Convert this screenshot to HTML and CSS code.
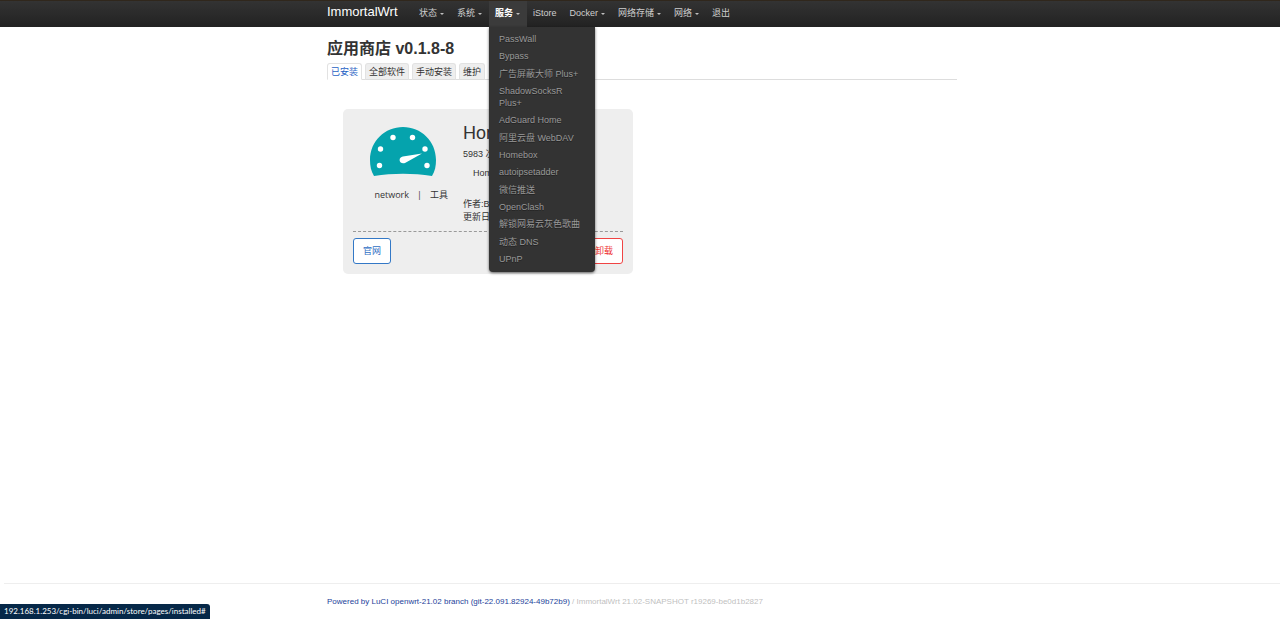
FILE: index.html
```html
<!DOCTYPE html>
<html lang="zh-CN">
<head>
<meta charset="utf-8">
<title>ImmortalWrt - 应用商店</title>
<link rel="stylesheet" href="styles.css">
</head>
<body>
<header class="topbar">
  <div class="container topbar-inner">
    <a class="brand" href="#">ImmortalWrt</a>
    <ul class="nav">
      <li><a class="nav-link has-menu" href="#">状态</a></li>
      <li><a class="nav-link has-menu" href="#">系统</a></li>
      <li class="open">
        <a class="nav-link has-menu" href="#">服务</a>
        <ul class="menu">
          <li><a href="#">PassWall</a></li>
          <li><a href="#">Bypass</a></li>
          <li><a href="#">广告屏蔽大师 Plus+</a></li>
          <li><a href="#">ShadowSocksR Plus+</a></li>
          <li><a href="#">AdGuard Home</a></li>
          <li><a href="#">阿里云盘 WebDAV</a></li>
          <li><a href="#">Homebox</a></li>
          <li><a href="#">autoipsetadder</a></li>
          <li><a href="#">微信推送</a></li>
          <li><a href="#">OpenClash</a></li>
          <li><a href="#">解锁网易云灰色歌曲</a></li>
          <li><a href="#">动态 DNS</a></li>
          <li><a href="#">UPnP</a></li>
        </ul>
      </li>
      <li><a class="nav-link" href="#">iStore</a></li>
      <li><a class="nav-link has-menu" href="#">Docker</a></li>
      <li><a class="nav-link has-menu" href="#">网络存储</a></li>
      <li><a class="nav-link has-menu" href="#">网络</a></li>
      <li><a class="nav-link" href="#">退出</a></li>
    </ul>
  </div>
</header>
<main class="container main">
  <h1 class="title">应用商店 v0.1.8-8</h1>
  <nav class="tabs">
    <a class="tab active" href="#">已安装</a>
    <a class="tab" href="#">全部软件</a>
    <a class="tab" href="#">手动安装</a>
    <a class="tab" href="#">维护</a>
  </nav>
  <section class="apps">
    <article class="card">
      <div class="card-body">
        <div class="card-side">
          <svg class="app-icon" viewBox="0 0 66 49" aria-hidden="true">
            <path fill="#05a3ad" d="M4 49C1 44 0 39 0 33 0 14 15 0 33 0s33 14 33 33c0 6-1 11-4 16-19-3-39-3-58 0z"/>
            <g fill="#fff">
              <circle cx="23" cy="10.500" r="2.700"/><circle cx="42.500" cy="10.500" r="2.700"/>
              <circle cx="10.500" cy="22" r="2.700"/><circle cx="55" cy="22" r="2.700"/>
              <circle cx="9.500" cy="38.500" r="2.700"/><circle cx="57" cy="38.500" r="2.700"/>
              <path d="M52 26.500 35.500 35.700c-2.600 1.500-5.700.4-5.900-2.400-.1-2.100 1.400-3.400 3.300-3.800z"/>
            </g>
          </svg>
          <p class="tags"><span>network</span><span>|</span><span>工具</span></p>
        </div>
        <div class="card-info">
          <h2 class="app-name">Homebox</h2>
          <p class="count">5983 次</p>
          <p class="desc">Home</p>
          <p class="meta">作者:Ben</p>
          <p class="meta">更新日期</p>
        </div>
      </div>
      <div class="card-actions">
        <button class="btn" type="button">官网</button>
        <button class="btn danger" type="button">卸载</button>
      </div>
    </article>
  </section>
</main>
<footer class="footer">
  <div class="container"><p class="credits"><a href="#">Powered by LuCI openwrt-21.02 branch (git-22.091.82924-49b72b9)</a> / ImmortalWrt 21.02-SNAPSHOT r19269-be0d1b2827</p></div>
</footer>
<div class="status">192.168.1.253/cgi-bin/luci/admin/store/pages/installed#</div>
</body>
</html>
```
FILE: styles.css
```css
* { box-sizing: border-box; }
body {
  margin: 0;
  min-height: 100vh;
  display: flex;
  flex-direction: column;
  background: #fff;
  color: #333;
  font: 9px/12px "Liberation Sans", "Noto Sans CJK SC", sans-serif;
}
ul, p, h1, h2 { margin: 0; padding: 0; list-style: none; }
a { text-decoration: none; color: inherit; }
.container { width: 100%; max-width: 630px; margin: 0 auto; }
.topbar {
  padding-left: 4px;
  background: linear-gradient(#333, #222);
  border-top: 1px solid #30271c;
  color: #cfcfcf;
}
.topbar-inner { display: flex; height: 26px; }
.brand { width: 86px; color: #fff; font-size: 13px; line-height: 22px; }
.nav { display: flex; }
.nav > li { position: relative; }
.nav-link { display: flex; align-items: center; gap: 3px; height: 26px; padding: 0 7px 2px 6px; }
.has-menu::after {
  content: "";
  border: 2px solid transparent;
  border-top-color: #bfbfbf;
  border-bottom: 0;
  margin-top: 2px;
}
.open { background: #3b3b3b; }
.open > .nav-link { color: #fff; font-weight: bold; }
.menu {
  position: absolute;
  z-index: 2;
  top: 100%;
  left: 0;
  width: 106px;
  min-height: 245px;
  padding: 3px 0 5px;
  display: flex;
  flex-direction: column;
  justify-content: space-between;
  background: #333;
  border-radius: 0 0 4px 4px;
  box-shadow: 0 1px 3px rgba(0, 0, 0, 0.6);
  color: #999;
}
.menu a { display: block; padding: 3px 10px 2px; text-shadow: 0 1px 0 #222; }
.main { padding-left: 4px; max-width: 634px; flex: 1; }
.title { margin-top: 11px; font-size: 16px; line-height: 22px; }
.tabs { display: flex; gap: 3px; margin-top: 3px; border-bottom: 1px solid #ddd; }
.tab {
  height: 17px;
  padding: 2px 3px;
  margin-bottom: -1px;
  background: #eee;
  border: 1px solid #e2e2e2;
  border-bottom-color: #ddd;
  border-radius: 3px 3px 0 0;
}
.tab.active { background: #fff; border-bottom-color: #fff; color: #1f62c4; }
.apps { padding: 29px 16px; }
.card { max-width: 290px; padding: 14px 10px 10px; background: #eee; border-radius: 5px; }
.card-body { display: flex; gap: 10px; padding-bottom: 7px; border-bottom: 1px dashed #999; }
.card-side { width: 100px; padding-top: 4px; }
.app-icon { display: block; width: 66px; margin: 0 auto; }
.tags {
  display: flex;
  justify-content: flex-end;
  gap: 8px;
  margin-top: 13px;
  padding-right: 5px;
  font-family: "Open Sans", "Noto Sans CJK SC", sans-serif;
}
.app-name { font-size: 18px; line-height: 20px; font-weight: normal; }
.count { margin-top: 5px; }
.desc { margin: 7px 10px 19px; }
.meta { line-height: 13px; }
.card-actions { display: flex; justify-content: space-between; padding-top: 6px; }
.btn {
  width: 38px;
  height: 26px;
  padding: 0;
  font: inherit;
  background: #fff;
  border: 1px solid #3378c6;
  border-radius: 3px;
  color: #2f70c4;
}
.btn.danger { border-color: #f04444; color: #e33; }
.footer { margin-left: 4px; border-top: 1px solid #eee; padding: 12px 0 11px; color: #bfbfbf; }
.footer a { color: #1d3f9a; }
.credits { font-size: 8px; }
.status {
  position: fixed;
  left: 0;
  bottom: 0;
  padding: 1px 4px;
  background: #062848;
  color: #fff;
  font: 8px/13px Lato, sans-serif;
  border-radius: 0 3px 0 0;
}
```
